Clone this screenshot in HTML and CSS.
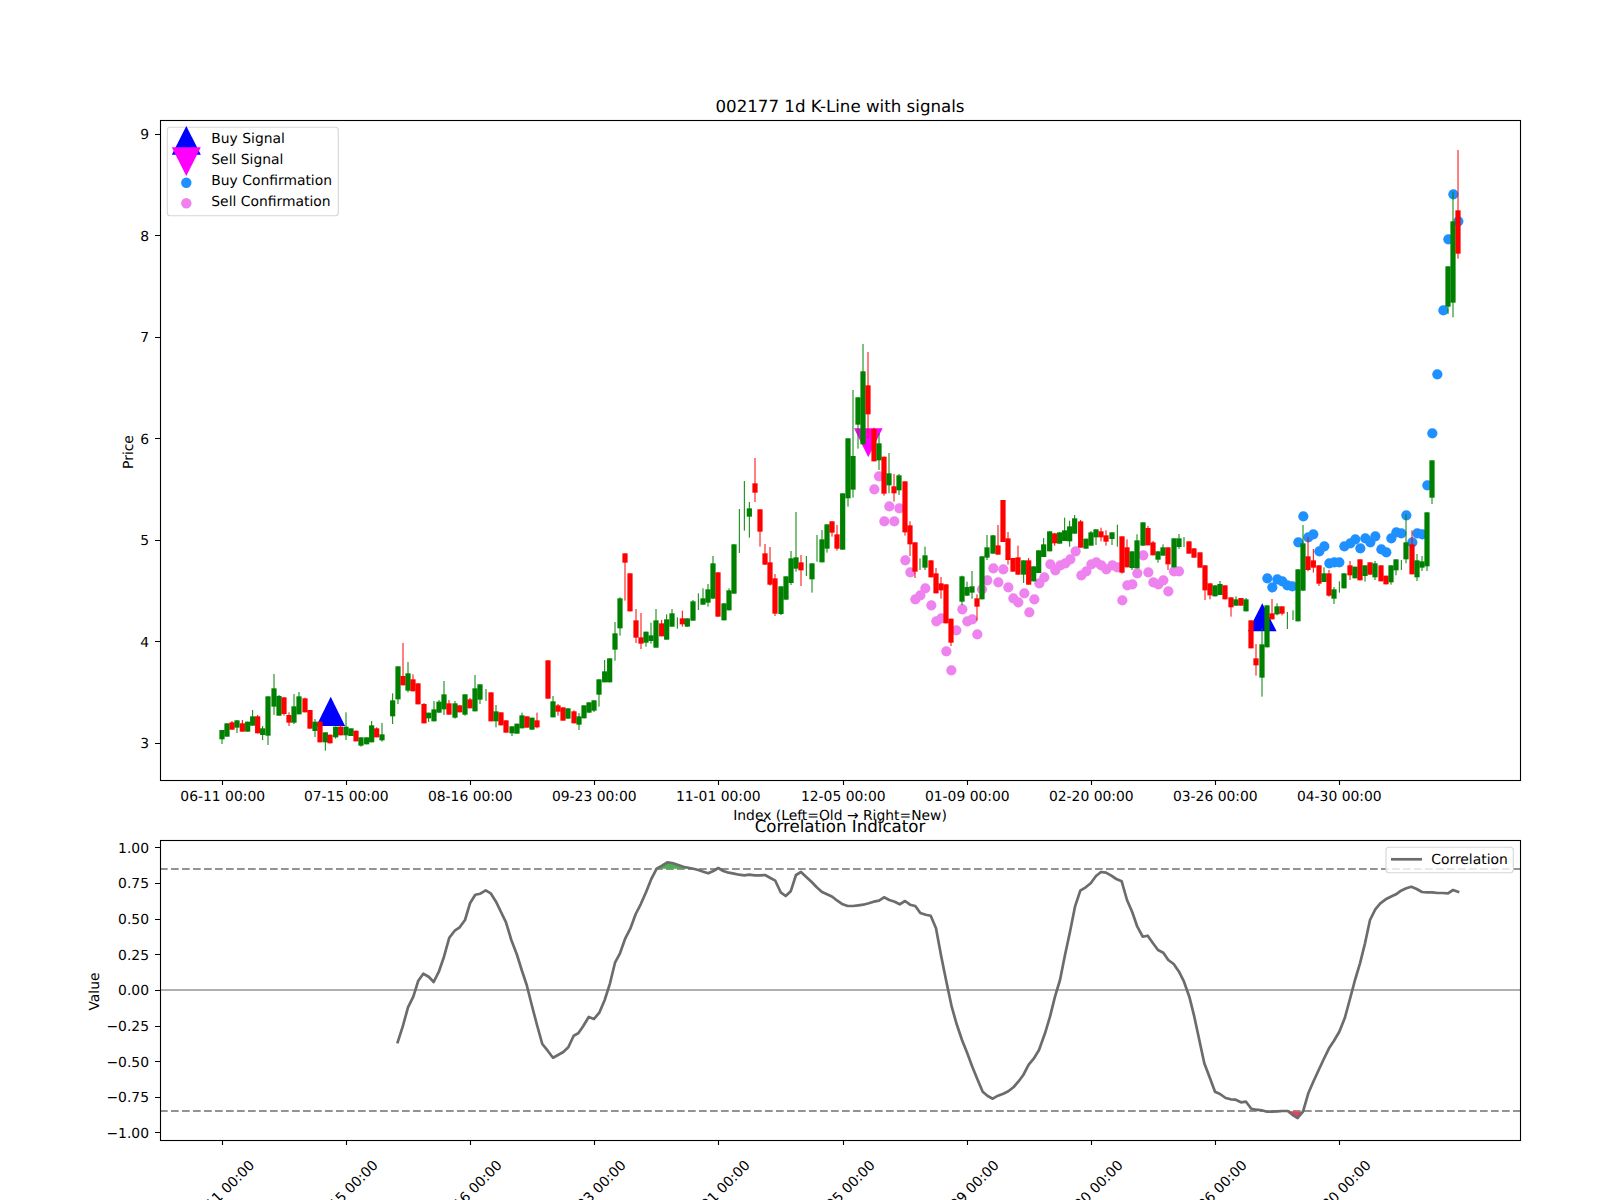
FILE: index.html
```html
<!DOCTYPE html>
<html lang="en">
<head>
<meta charset="utf-8">
<title>002177 1d K-Line with signals</title>
<link rel="stylesheet" href="styles.css">
</head>
<body>
<svg class="figure" width="1600" height="1200" viewBox="0 0 1600 1200" xmlns="http://www.w3.org/2000/svg">
  <!-- price panel -->
  <g id="signals">
    <polygon class="buy" points="330.7,696.7 316.3,726 345.1,726"/>
    <polygon class="buy" points="1262.3,603.3 1248,631.3 1276.6,631.3"/>
    <polygon class="sell" points="868.3,457.3 854,428.3 882.6,428.3"/>
  </g>
  <g id="dots"></g>
  <g id="candles"></g>
  <rect class="spine" x="160.5" y="120.5" width="1360" height="660"/>

  <g class="ticks">
    <path d="M222.5 780v5M346.5 780v5M470.5 780v5M594.5 780v5M718.5 780v5M843.5 780v5M967.5 780v5M1091.5 780v5M1215.5 780v5M1339.5 780v5"/>
    <path d="M155 134.5h5M155 235.5h5M155 337.5h5M155 438.5h5M155 540.5h5M155 641.5h5M155 743.5h5"/>
    <path d="M222.5 1140v5M346.5 1140v5M470.5 1140v5M594.5 1140v5M718.5 1140v5M843.5 1140v5M967.5 1140v5M1091.5 1140v5M1215.5 1140v5M1339.5 1140v5"/>
    <path d="M155 847.5h5M155 883.5h5M155 919.5h5M155 954.5h5M155 990.5h5M155 1026.5h5M155 1061.5h5M155 1097.5h5M155 1132.5h5"/>
  </g>

  <g class="label mid">
    <text x="222.7" y="800.5">06-11 00:00</text>
    <text x="346.3" y="800.5">07-15 00:00</text>
    <text x="470.3" y="800.5">08-16 00:00</text>
    <text x="594.3" y="800.5">09-23 00:00</text>
    <text x="718.3" y="800.5">11-01 00:00</text>
    <text x="843.3" y="800.5">12-05 00:00</text>
    <text x="967.3" y="800.5">01-09 00:00</text>
    <text x="1091.3" y="800.5">02-20 00:00</text>
    <text x="1215.3" y="800.5">03-26 00:00</text>
    <text x="1339.3" y="800.5">04-30 00:00</text>
  </g>
  <g class="label end">
    <text x="149" y="139.3">9</text>
    <text x="149" y="240.7">8</text>
    <text x="149" y="342.2">7</text>
    <text x="149" y="443.6">6</text>
    <text x="149" y="545.1">5</text>
    <text x="149" y="646.5">4</text>
    <text x="149" y="748">3</text>
  </g>
  <text class="label mid" transform="rotate(-90 133 452)" x="133" y="452">Price</text>
  <text class="label mid" x="840" y="820">Index (Left=Old → Right=New)</text>
  <text class="title" x="840" y="112">002177 1d K-Line with signals</text>

  <!-- correlation panel -->
  <line class="zero" x1="160" y1="990" x2="1520" y2="990"/>
  <line class="limit" x1="160" y1="869" x2="1520" y2="869"/>
  <line class="limit" x1="160" y1="1111" x2="1520" y2="1111"/>
  <polygon class="fill-high" points="656.7,868.7 662,865.7 667.3,862.3 672.3,863 678.3,865 683.3,866.7 688.3,868.7"/>
  <polygon class="fill-low" points="1287.7,1111 1292.7,1115 1297.7,1118 1303,1111.7"/>
  <polyline class="corr" id="corr" points=""/>
  <rect class="spine" x="160.5" y="840.5" width="1360" height="300"/>

  <g class="label end">
    <text x="149" y="852.7">1.00</text>
    <text x="149" y="888.3">0.75</text>
    <text x="149" y="924">0.50</text>
    <text x="149" y="959.6">0.25</text>
    <text x="149" y="995.3">0.00</text>
    <text x="149" y="1031">−0.25</text>
    <text x="149" y="1066.6">−0.50</text>
    <text x="149" y="1102.3">−0.75</text>
    <text x="149" y="1138">−1.00</text>
  </g>
  <g class="label mid">
    <text transform="rotate(-45 221.7 1192.5)" x="221.7" y="1197.5">06-11 00:00</text>
    <text transform="rotate(-45 345.3 1192.5)" x="345.3" y="1197.5">07-15 00:00</text>
    <text transform="rotate(-45 469.3 1192.5)" x="469.3" y="1197.5">08-16 00:00</text>
    <text transform="rotate(-45 593.3 1192.5)" x="593.3" y="1197.5">09-23 00:00</text>
    <text transform="rotate(-45 717.3 1192.5)" x="717.3" y="1197.5">11-01 00:00</text>
    <text transform="rotate(-45 842.3 1192.5)" x="842.3" y="1197.5">12-05 00:00</text>
    <text transform="rotate(-45 966.3 1192.5)" x="966.3" y="1197.5">01-09 00:00</text>
    <text transform="rotate(-45 1090.3 1192.5)" x="1090.3" y="1197.5">02-20 00:00</text>
    <text transform="rotate(-45 1214.3 1192.5)" x="1214.3" y="1197.5">03-26 00:00</text>
    <text transform="rotate(-45 1338.3 1192.5)" x="1338.3" y="1197.5">04-30 00:00</text>
  </g>
  <text class="label mid" transform="rotate(-90 99 991.5)" x="99" y="991.5">Value</text>
  <text class="title" x="840" y="832.3">Correlation Indicator</text>

  <!-- legends -->
  <rect class="legend" x="167.3" y="127.3" width="171" height="88.4" rx="3"/>
  <polygon class="buy" points="186.3,126 171.8,154.7 200.8,154.7"/>
  <polygon class="sell" points="186.3,176 171.8,147.3 200.8,147.3"/>
  <circle class="dot-buy" cx="186.3" cy="182.7" r="5.2"/>
  <circle class="dot-sell" cx="186.3" cy="203.3" r="5.2"/>
  <g class="label">
    <text x="211.3" y="143.3">Buy Signal</text>
    <text x="211.3" y="164.3">Sell Signal</text>
    <text x="211.3" y="185.3">Buy Confirmation</text>
    <text x="211.3" y="206.3">Sell Confirmation</text>
  </g>
  <rect class="legend" x="1386" y="847.3" width="127.3" height="25.4" rx="3"/>
  <line class="corr" x1="1391" y1="859.3" x2="1422" y2="859.3"/>
  <text class="label" x="1431.3" y="864.3">Correlation</text>
</svg>
<script src="script.js"></script>
</body>
</html>
```
FILE: styles.css
```css
html, body {
  margin: 0;
  padding: 0;
  background: #ffffff;
}

.figure {
  display: block;
  font-family: "DejaVu Sans", sans-serif;
  text-rendering: geometricPrecision;
}

.label {
  font-size: 13.89px;
  fill: #000000;
}

.mid { text-anchor: middle; }
.end { text-anchor: end; }

.title {
  font-size: 16.67px;
  fill: #000000;
  text-anchor: middle;
}

.spine {
  fill: none;
  stroke: #000000;
  stroke-width: 1.1;
}

.ticks path {
  fill: none;
  stroke: #000000;
  stroke-width: 1.1;
}

.buy { fill: #0000ff; }
.sell { fill: #ff00ff; }
.dot-buy { fill: #1e90ff; }
.dot-sell { fill: #ee82ee; }

.body-up { fill: #008000; }
.body-down { fill: #ff0000; }
.wick-up { stroke: #008000; stroke-width: 1; }
.wick-down { stroke: #ff0000; stroke-width: 1; }

.zero {
  stroke: #b0b0b0;
  stroke-width: 2;
}

.limit {
  stroke: #939393;
  stroke-width: 2.1;
  stroke-dasharray: 7.7 3.3;
}

.fill-high { fill: #4caf50; }
.fill-low { fill: #e8405f; }

.corr {
  fill: none;
  stroke: #6c6c6c;
  stroke-width: 2.7;
  stroke-linejoin: round;
}

.legend {
  fill: #ffffff;
  fill-opacity: 0.8;
  stroke: #d6d6d6;
  stroke-width: 1.1;
}
```
FILE: script.js
```js
// Values are read in groups, each with its own origin and a 3x scale.
var NS = "http://www.w3.org/2000/svg";
var R = 0, G = 1;

var candleGroups = [
  [200, 620, [
    [66,G,330,358,330,372],[81,G,310,350],[96,R,307,329,303],[111,G,301,323,301,339],[127,R,310,335,300],
    [143,G,305,335],[158,G,289,317,270],[173,R,289,340,285],[188,G,325,345,318,360],[204,G,229,347,229,375],
    [222,G,205,260,162,285],[237,G,228,287,225],[252,R,232,282,232,287],[267,R,285,308,277,318],[282,G,259,308,222,312],
    [297,G,229,283,216],[315,R,235,277,233],[330,R,270,326],[345,G,305,333,297,351],[360,R,305,367],
    [376,G,337,367,337,392],[390,R,344,370],[407,G,320,352,320,356],[422,R,320,346,316],[438,G,320,346,277,360],
    [453,G,325,348],[468,R,332,364],[483,G,352,377,352,380],[500,G,352,373],[515,G,316,367,303],
    [530,R,325,352,322],[546,G,343,361,309,365],[578,G,241,289,220,312],[594,G,139,238,139,252],[609,R,168,196,69],
    [624,G,160,212,126,217],[639,R,178,214,163],[654,R,190,253],[672,R,252,310,249],[686,G,278,295,278,306],
    [702,G,268,304,243],[717,G,245,278,240],[732,G,223,268,183,285],[747,R,250,284,240],[765,G,250,293,243,296],
    [779,R,256,277],[795,G,223,284,223,287],[810,R,238,265,234],[825,G,205,274,165],[840,G,193,239,193,252],
    [858,G,0,0,207,243],[873,R,217,304],[888,G,274,304,255,322]
  ]],
  [490, 650, [
    [33,R,187,226],[48,R,211,248],[66,G,229,250,229,258],[81,G,221,251],[96,G,196,235,188],
    [111,R,199,233],[126,G,203,239],[141,R,211,232,188,235],[174,R,31,146],[189,G,154,202,138],
    [204,R,166,185,162,197],[219,R,172,212],[234,G,175,206],[252,R,184,220,181],[267,G,199,224,189,240],
    [282,G,166,205],[297,G,157,188],[312,G,151,182,151,186],[327,G,88,134,88,170],[344,G,64,97,30],[359,G,25,97]
  ]],
  [500, 520, [
    [345,G,340,389,306,422],[360,G,235,325,232,347],[375,R,100,128,100,242],[390,R,160,274],[408,R,301,353,267,369],
    [423,R,352,371,279,387],[438,G,335,368,335,380],[453,G,346,363,308,371],[468,G,301,383,267],[485,R,310,349,300],
    [500,G,298,359,283],[516,G,280,320,267],[532,G,0,0,292,326],[547,R,295,313,272,320],[562,G,295,320],
    [579,G,244,302,240],[595,G,0,0,220,270],[609,G,235,254,205],[624,G,208,248,192,260],[639,G,130,236,108],
    [654,R,157,290],[672,G,250,301],[687,G,211,271,205],[702,G,73,221]
  ]],
  [690, 440, [
    [148,G,0,0,207,339],[163,G,0,0,123,272],[178,G,205,230,186,293],[195,R,130,158,54,186],[210,R,208,275,208,320]
  ]],
  [500, 520, [
    [795,R,100,134,72],[810,R,127,194,81,197],[825,R,175,281,162,288]
  ]],
  [780, 330, [
    [3,G,769,852,769,855],[18,G,739,809],[33,G,685,759,663,765],[48,G,682,716,546,725],[63,R,697,721,675,768],
    [79,G,0,0,678,738],[96,G,700,748,700,788],[111,G,0,0,615,695],[126,G,628,697,600],[141,G,583,656,583,668],
    [156,R,574,608,574,620],[171,R,613,656,585,662],[188,G,490,659],[204,G,325,505,325,530],[219,G,378,479,180,503],
    [234,G,202,284,202,356],[249,G,124,343,42],[264,R,166,253,66,325],[282,R,297,394,293],[297,G,340,391,310,420],
    [312,R,380,491,380,497],[327,G,430,466,369,490],[342,R,469,490,432,515],[357,G,436,481,432,495],[375,R,454,607,454,617],
    [390,R,586,643,574,678],[405,R,637,725,637,744],[420,G,0,0,685,720],[435,G,676,713,650,720],[453,R,691,742],
    [468,R,730,790,714],[483,R,760,781,741,806],[498,R,763,880],[513,R,866,938,866,948],[546,G,739,815,737,825],
    [561,G,771,797,755,798],[576,G,769,788,723,806],[591,R,805,830,793,872],[606,G,679,808],[621,G,652,683,615,690],
    [639,G,616,671,615],[654,R,646,674,585]
  ]],
  [1000, 480, [
    [9,R,60,186],[24,R,175,240,156,254],[39,R,234,275],[54,R,232,284,197],[71,G,241,284,241,309],
    [86,R,241,314,234],[101,G,259,304],[116,G,211,279],[131,G,193,231,174],[149,G,154,214],
    [164,R,160,190,160,197],[179,G,157,191],[194,G,151,183,113],[209,G,139,184,122,200],[224,G,115,161,105],
    [242,R,124,203,120],[258,G,176,206],[273,G,157,197,153],[288,G,148,172,148,195],[303,R,154,172,143,184],
    [318,R,166,185,151,197],[336,G,157,177,157,195],[352,G,0,0,134,200],[366,R,169,278,169,281],[381,R,202,262,178],
    [396,G,214,264,214,270],[411,G,181,265,163],[429,G,127,197],[444,R,144,196,138],[459,R,187,226,183],
    [474,G,214,239,214,248],[489,G,202,227,193],[504,R,202,253,202,270],[522,G,175,262],[537,G,175,201,162,207],
    [552,G,0,0,171,201],[567,R,184,221],[582,R,205,233],[600,R,217,263],[615,R,256,331,256,360],
    [630,R,310,346,310,358],[645,G,316,349]
  ]],
  [1220, 480, [
    [0,G,312,345,303],[15,R,316,358],[33,R,352,382,352,410],[48,G,358,377,349],[63,R,354,377],
    [78,G,358,394,354],[93,R,421,505],[108,R,535,556,492,587],[126,G,493,593,445,650],[141,G,376,502],
    [156,R,400,418,357],[171,G,379,403,370,406],[186,R,379,401,379,406],[202,G,0,0,396,447],[219,G,0,0,391,420],
    [234,G,268,424],[249,G,190,332,135],[264,R,229,270,171,274],[280,R,241,263,207,278],[297,R,256,311,256,318],
    [312,G,280,306,262],[327,R,280,347,270,350],[342,G,328,356,321,372],[358,G,0,0,304,338],[372,G,280,325],
    [390,R,256,286,243,300],[405,G,260,295],[420,R,238,301],[435,G,256,288,256,305],[450,R,247,284],
    [465,G,250,292,243,300],[483,R,256,304],[498,R,287,313],[513,G,256,307,256,314],[528,G,238,271,238,286],
    [544,G,0,0,240,270],[558,G,187,238,103,250],[576,R,193,283,151],[591,G,241,292,222,303],[606,G,244,263,228,273],
    [621,G,97,259,97,273]
  ]],
  [1380, 130, [
    [156,G,991,1103,991,1122],[204,G,409,530,409,552],[219,G,274,518,185,562],[234,R,241,371,60,386]
  ]]
];

var dotGroups = [
  ["dot-sell", 780, 330, [
    [297,439],[283,478],[328,529],[358,535],[313,574],[343,574],[376,691],[391,727],[436,775],[421,796],
    [406,808],[454,826],[484,865],[469,874],[529,901],[499,964],[514,1021],[547,838],[577,868],[562,874],
    [592,913],[606,778],[622,751],[640,715],[670,718],[655,757],[685,772],[700,805],[715,817]
  ]],
  ["dot-sell", 1000, 480, [
    [73,340],[103,358],[88,397],[118,310],[133,292],[151,253],[166,271],[181,256],[196,250],[211,238],
    [227,214],[244,286],[259,274],[274,253],[289,247],[304,256],[319,268],[337,256],[352,262],[367,361],
    [382,316],[397,313],[412,280],[430,226],[445,277],[460,307],[475,313],[490,301],[505,334],[522,274],[537,274]
  ]],
  ["dot-buy", 1220, 480, [
    [142,295],[157,322],[172,298],[187,304],[202,316],[217,319],[235,187],[250,109],[265,172],[280,163],
    [298,214],[313,199],[328,250],[343,247],[358,247],[373,199],[391,190],[406,178],[421,205],[436,175],
    [451,187],[466,169],[484,208],[499,217],[514,175],[529,157],[544,160],[559,106],[577,187],[592,160],
    [607,163],[622,16]
  ]],
  ["dot-buy", 1380, 130, [
    [220,193],[235,274],[205,328],[190,541],[172,733],[157,910]
  ]]
];

var corrGroups = [
  [80, 770, [
    [952,820],[968,770],[984,712],[1000,680],[1015,632],[1030,611],[1046,620],[1061,636],[1077,604],[1092,560],
    [1108,503],[1124,482],[1139,472],[1155,450],[1170,400],[1186,374],[1201,371],[1217,361],[1232,370],[1248,395],
    [1263,426],[1278,457],[1294,510],[1310,552],[1325,600],[1340,645],[1356,708],[1371,765],[1387,822],[1403,842],
    [1419,863],[1434,855],[1450,846],[1465,832],[1481,797]
  ]],
  [550, 770, [
    [85,790],[100,768],[116,741],[132,747],[148,728],[164,690],[180,640],[195,578],[210,550],[226,505],
    [241,476],[257,432],[272,403],[288,367],[304,327],[320,296],[336,287],[352,277],[367,279],[385,285],
    [400,290],[415,293],[430,296],[445,300],[460,305],[475,310],[490,303],[505,294],[520,303],[536,308],
    [552,311],[567,314],[583,316],[598,314],[614,316],[630,316],[645,315],[660,323],[676,332],[692,367],
    [707,378],[722,364],[738,315],[753,306],[768,320],[785,336],[800,352],[816,366],[831,373],[847,380],
    [862,392],[878,403],[893,408],[909,408],[925,406],[940,404],[956,400],[971,395],[987,392],[1002,382],
    [1018,390],[1034,395],[1049,403],[1065,393],[1080,404],[1096,408],[1111,429],[1127,434],[1142,437],[1158,475],
    [1174,560],[1190,640],[1205,710],[1220,763],[1236,810],[1252,850],[1267,890],[1283,930],[1298,965],[1313,978],
    [1328,986],[1344,977],[1360,971],[1375,964],[1391,951],[1405,935],[1420,915],[1436,884],[1451,866],[1467,840]
  ]],
  [1040, 770, [
    [15,790],[30,740],[45,680],[60,630],[75,555],[90,485],[105,410],[121,362],[137,352],[152,340],
    [168,318],[183,306],[198,308],[214,317],[229,327],[245,334],[261,390],[277,427],[292,470],[308,500],
    [323,497],[339,520],[354,540],[370,548],[385,570],[401,582],[417,605],[432,635],[448,680],[463,740],
    [478,810],[493,880],[510,925],[525,965],[540,972],[557,984],[572,988],[587,989],[603,997],[618,995],
    [634,1016],[649,1019],[665,1021],[681,1025],[696,1025],[712,1024],[727,1023],[743,1023],[758,1035],[773,1044],
    [789,1025],[805,970],[820,935],[836,900],[851,868],[867,835],[882,812],[898,785],[914,745],[929,690],
    [945,630],[960,580],[975,520],[990,450],[1006,418],[1021,400],[1037,388],[1052,380],[1068,373],[1083,362],
    [1099,355],[1114,350],[1130,357],[1146,366],[1161,367],[1177,367],[1193,369],[1208,369],[1224,370],[1239,360],[1258,367]
  ]]
];

function add(parent, tag, cls, attrs) {
  var el = document.createElementNS(NS, tag);
  el.setAttribute("class", cls);
  for (var k in attrs) el.setAttribute(k, attrs[k]);
  parent.appendChild(el);
}

var candles = document.getElementById("candles");
candleGroups.forEach(function (group) {
  var ox = group[0], oy = group[1];
  group[2].forEach(function (c) {
    var x = ox + c[0] / 3;
    var top = c[2], bot = c[3];
    var hi = c.length > 4 ? c[4] : top;
    var lo = c.length > 5 ? c[5] : bot;
    var up = c[1] === G;
    add(candles, "line", up ? "wick-up" : "wick-down", {
      x1: x, x2: x, y1: oy + hi / 3, y2: oy + lo / 3
    });
    if (bot > top) {
      add(candles, "rect", up ? "body-up" : "body-down", {
        x: x - 2.6, y: oy + top / 3, width: 5.2, height: (bot - top) / 3
      });
    }
  });
});

var dots = document.getElementById("dots");
dotGroups.forEach(function (group) {
  group[3].forEach(function (p) {
    add(dots, "circle", group[0], {
      cx: group[1] + p[0] / 3, cy: group[2] + p[1] / 3, r: 5.1
    });
  });
});

var pts = [];
corrGroups.forEach(function (group) {
  group[2].forEach(function (p) {
    pts.push((group[0] + p[0] / 3).toFixed(1) + "," + (group[1] + p[1] / 3).toFixed(1));
  });
});
document.getElementById("corr").setAttribute("points", pts.join(" "));
```
